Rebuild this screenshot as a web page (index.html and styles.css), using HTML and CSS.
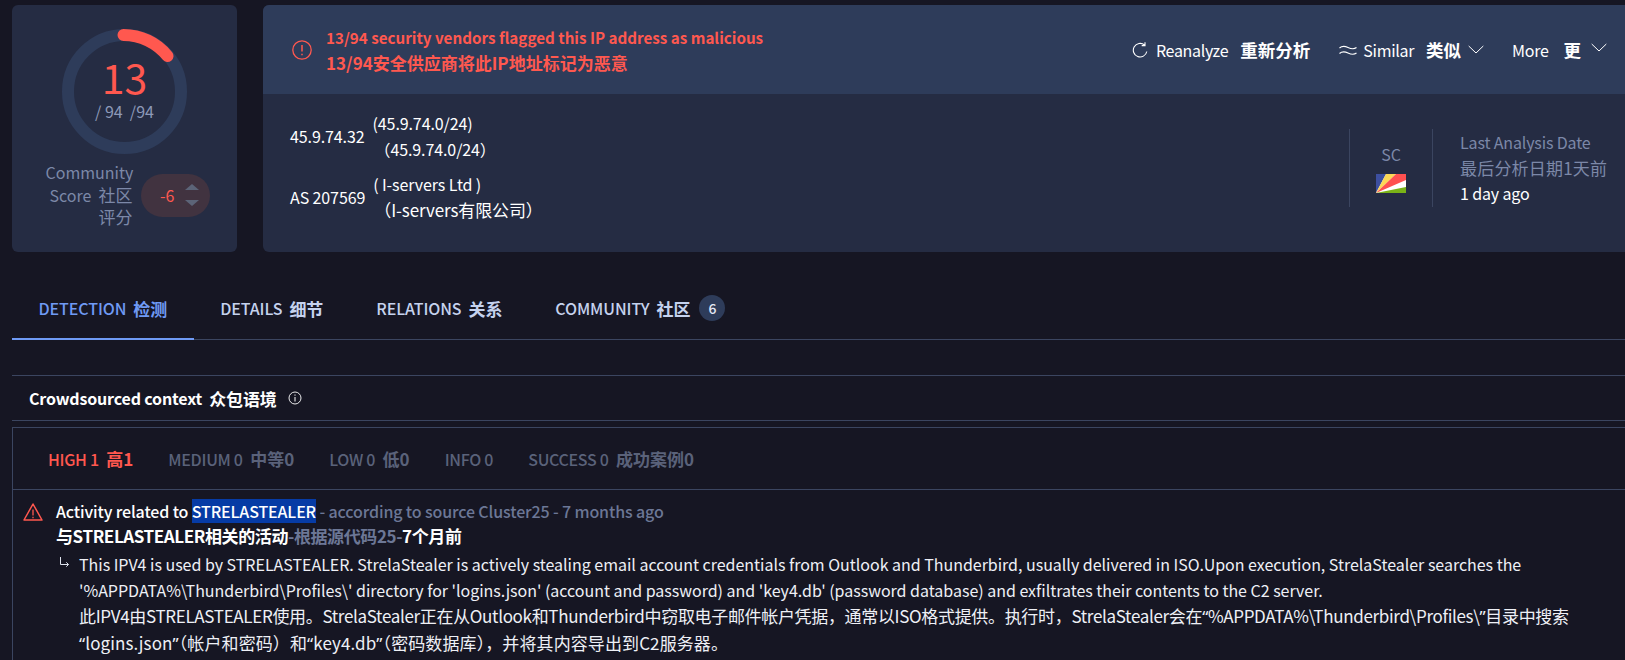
FILE: index.html
```html
<!DOCTYPE html>
<html lang="en">
<head>
    <meta charset="UTF-8">
    <meta name="viewport" content="width=device-width, initial-scale=1.0">
    <title>45.9.74.32</title>
    <link rel="stylesheet" href="styles.css">
</head>
<body>

<div class="summary">
    <div class="score-card">
        <div class="gauge">
            <svg width="125" height="125" viewBox="0 0 125 125">
                <circle cx="62.500" cy="62.500" r="56.500" fill="none" stroke="#2e3c5a" stroke-width="12"/>
                <path d="M61.500 6 A56.500 56.500 0 0 1 105.500 27" fill="none" stroke="#ff584f" stroke-width="12" stroke-linecap="round"/>
            </svg>
            <div class="gauge-text">
                <div class="gauge-num">13</div>
                <div class="gauge-total">/ 94 &nbsp;/94</div>
            </div>
        </div>
        <div class="community">
            <div class="community-label">Community<br>Score&nbsp; <span class="label-zh">社区</span><br><span class="label-zh">评分</span></div>
            <div class="vote">
                <span class="vote-num">-6</span>
                <span class="vote-arrows"><i class="arrow-up"></i><i class="arrow-down"></i></span>
            </div>
        </div>
    </div>

    <div class="info-card">
        <div class="alert-bar">
            <svg class="alert-icon" width="20" height="20" viewBox="0 0 20 20">
                <circle cx="10" cy="10" r="9.200" fill="none" stroke="#ff584f" stroke-width="1.300"/>
                <path d="M10 5v6.500M10 13.700v1.500" stroke="#ff584f" stroke-width="1.500" fill="none"/>
            </svg>
            <div class="alert-text">
                <div>13/94 security vendors flagged this IP address as malicious</div>
                <div class="alert-zh">13/94安全供应商将此IP地址标记为恶意</div>
            </div>
            <div class="actions">
                <span class="action action-first">
                    <svg class="action-icon" width="16" height="16" viewBox="0 0 16 16"><path d="M14.800 9.500A6.800 6.800 0 1 1 12.500 3M13 .3v3.300H9.700" fill="none" stroke="#fff" stroke-width="1.100"/></svg>
                    <span class="en">Reanalyze</span><b class="zh">重新分析</b>
                </span>
                <span class="action action-similar">
                    <svg class="action-icon" width="18" height="10" viewBox="0 0 18 10"><path d="M.5 3C3 .8 5.500 .8 9 2.500S15 4.500 17.500 2.500M.5 8.500C3 6.300 5.500 6.300 9 8S15 10 17.500 8" fill="none" stroke="#fff" stroke-width="1.100"/></svg>
                    <span class="en">Similar</span><b class="zh">类似</b>
                    <svg class="chev" width="16" height="9" viewBox="0 0 16 9"><path d="M.7 1l7.300 7 7.300-7" fill="none" stroke="#fff" stroke-width="1"/></svg>
                </span>
                <span class="action action-more">
                    <span class="en">More</span><b class="zh">更</b>
                    <svg class="chev chev-more" width="16" height="9" viewBox="0 0 16 9"><path d="M.7 1l7.300 7 7.300-7" fill="none" stroke="#fff" stroke-width="1"/></svg>
                </span>
            </div>
        </div>
        <div class="info-body">
            <div class="ip-info">
                <div class="ip-row">
                    <span>45.9.74.32</span>
                    <span class="ip-note">(45.9.74.0/24)<br><span class="ip-cidr-zh">（45.9.74.0/24）</span></span>
                </div>
                <div class="ip-row">
                    <span>AS 207569</span>
                    <span class="ip-note">( I-servers Ltd )<br><span class="ip-name-zh">（I-servers有限公司）</span></span>
                </div>
            </div>
            <div class="country">
                <span>SC</span>
                <svg width="30" height="19" viewBox="0 0 30 19">
                    <rect width="30" height="19" fill="#fff"/>
                    <path d="M0 19V0H10Z" fill="#3d4f9f"/>
                    <path d="M0 19L10 0H20Z" fill="#fcd856"/>
                    <path d="M0 19L20 0H30V6Z" fill="#ff5050"/>
                    <path d="M0 19L30 13V19Z" fill="#7ab317"/>
                </svg>
            </div>
            <div class="analysis">
                <div class="analysis-label">Last Analysis Date</div>
                <div class="analysis-label analysis-zh">最后分析日期1天前</div>
                <div class="analysis-value">1 day ago</div>
            </div>
        </div>
    </div>
</div>

<div class="tabs">
    <div class="tab active"><span>DETECTION</span><span class="zh">检测</span></div>
    <div class="tab"><span>DETAILS</span><span class="zh">细节</span></div>
    <div class="tab"><span>RELATIONS</span><span class="zh">关系</span></div>
    <div class="tab"><span>COMMUNITY</span><span class="zh">社区</span><span class="tab-badge">6</span></div>
</div>

<div class="section-head">
    <span>Crowdsourced context</span><span class="zh">众包语境</span>
    <svg width="14" height="14" viewBox="0 0 14 14">
        <circle cx="7" cy="7" r="6" fill="none" stroke="#fff" stroke-width=".9"/>
        <path d="M7 6v4.500M7 3.500v1.200" stroke="#fff" stroke-width="1" fill="none"/>
    </svg>
</div>

<div class="context-box">
    <div class="filters">
        <span class="filter high"><span>HIGH 1</span><span class="zh">高1</span></span>
        <span class="filter"><span>MEDIUM 0</span><span class="zh">中等0</span></span>
        <span class="filter"><span>LOW 0</span><span class="zh">低0</span></span>
        <span class="filter"><span>INFO 0</span></span>
        <span class="filter"><span>SUCCESS 0</span><span class="zh">成功案例0</span></span>
    </div>
    <div class="entry">
        <svg class="warn" width="20" height="18" viewBox="0 0 20 18">
            <path d="M10 1L19 17H1Z" fill="none" stroke="#ff584f" stroke-width="1.500" stroke-linejoin="round"/>
            <path d="M10 6.500v6M10 13.800v1.500" stroke="#ff584f" stroke-width="1.300" fill="none"/>
        </svg>
        <div class="entry-main">
            <div class="entry-title">Activity related to <span class="selected">STRELASTEALER</span> <span class="muted">- according to source Cluster25 - 7 months ago</span></div>
            <div class="entry-title entry-title-zh">与STRELASTEALER相关的活动<span class="muted">-根据源代码25-</span>7个月前</div>
            <div class="entry-desc">
                <svg class="reply" width="11" height="11" viewBox="0 0 11 11"><path d="M1.500 0v7.500H9.500M7.300 5.300L9.500 7.500 7.300 9.700" fill="none" stroke="#dfe3ee" stroke-width="1"/></svg>
                <div>
                    <p>This IPV4 is used by STRELASTEALER. StrelaStealer is actively stealing email account credentials from Outlook and Thunderbird, usually delivered in ISO.Upon execution, StrelaStealer searches the<br>'%APPDATA%\Thunderbird\Profiles\' directory for 'logins.json' (account and password) and 'key4.db' (password database) and exfiltrates their contents to the C2 server.</p>
                    <p class="desc-zh">此IPV4由STRELASTEALER使用。StrelaStealer正在从Outlook和Thunderbird中窃取电子邮件帐户凭据，通常以ISO格式提供。执行时，StrelaStealer会在<span class="q">“</span>%APPDATA%\Thunderbird\Profiles\<span class="q">”</span>目录中搜索<br><span class="desc-zh-end"><span class="q">“</span>logins.json<span class="q">”</span>（帐户和密码）和<span class="q">“</span>key4.db<span class="q">”</span>（密码数据库），并将其内容导出到C2服务器。</span></p>
                </div>
            </div>
        </div>
    </div>
</div>

</body>
</html>
```

FILE: styles.css
```css
html, body {
    height: 660px;
    overflow: hidden;
}

body {
    font-family: "Noto Sans CJK SC", "Noto Sans", sans-serif;
    font-size: 16px;
    background-color: #161623;
    color: #fff;
    margin: 0;
    padding: 5px 0 0 12px;
    box-sizing: border-box;
}

.zh {
    font-size: 17px;
    margin-left: 7px;
}

.summary {
    display: flex;
    gap: 26px;
    height: 247px;
}

/* score card */
.score-card {
    width: 225px;
    flex: none;
    background-color: #252c43;
    border-radius: 6px;
    display: flex;
    flex-direction: column;
    align-items: center;
    padding-top: 24px;
    box-sizing: border-box;
}

.gauge {
    position: relative;
    width: 125px;
    height: 125px;
}

.gauge-text {
    position: absolute;
    inset: 0;
    text-align: center;
}

.gauge-num {
    font-size: 41px;
    color: #ff584f;
    line-height: 44px;
    margin-top: 25px;
}

.gauge-total {
    font-size: 16px;
    color: #8d99b8;
    line-height: 20px;
    margin-top: 3px;
}

.community {
    display: flex;
    align-items: center;
    gap: 8px;
    margin-top: 8px;
    margin-left: 6px;
}

.community-label {
    width: 87px;
    text-align: right;
    color: #7c88a8;
    line-height: 21.500px;
    white-space: nowrap;
}

.label-zh {
    font-size: 17px;
}

.vote {
    width: 69px;
    height: 43px;
    border-radius: 22px;
    background-color: #413340;
    display: flex;
    align-items: center;
    justify-content: flex-end;
    gap: 10px;
    padding-right: 11px;
    box-sizing: border-box;
}

.vote-num {
    color: #ff584f;
}

.vote-arrows {
    display: flex;
    flex-direction: column;
    gap: 10px;
}

.arrow-up, .arrow-down {
    display: block;
    width: 0;
    height: 0;
    border-left: 7px solid transparent;
    border-right: 7px solid transparent;
}

.arrow-up {
    border-bottom: 6px solid #5c6478;
}

.arrow-down {
    border-top: 6px solid #5c6478;
}

/* info card */
.info-card {
    flex: 1;
    background-color: #252c43;
    border-radius: 6px 0 0 6px;
    overflow: hidden;
    display: flex;
    flex-direction: column;
}

.alert-bar {
    height: 89px;
    background-color: #2e3c5a;
    display: flex;
    align-items: center;
    padding-left: 29px;
    flex: none;
}

.alert-text {
    margin-left: 14px;
    color: #ff584f;
    font-weight: 700;
    font-size: 15.200px;
    line-height: 25px;
    white-space: nowrap;
}

.alert-zh {
    font-size: 17px;
}

.actions {
    margin-left: auto;
    display: flex;
    align-items: center;
}

.action {
    display: flex;
    align-items: center;
}

.action .en {
    letter-spacing: -0.3px;
}

.action .zh {
    font-size: 17.500px;
    margin-left: 12px;
}

.action-more .zh {
    margin-left: 15px;
}

.action-icon {
    margin-right: 8px;
}

.action-similar .action-icon {
    margin-right: 6px;
}

.chev {
    margin-left: 7px;
}

.chev-more {
    margin-left: 10px;
    margin-top: -4px;
}

.action-first {
    margin-right: 29px;
}

.action-similar {
    margin-right: 28px;
}

.action-more {
    margin-right: 18px;
}

.info-body {
    flex: 1;
    display: flex;
    align-items: center;
    padding: 0 18px 10px 27px;
}

.ip-info {
    display: flex;
    flex-direction: column;
    gap: 9px;
    margin-right: auto;
    margin-bottom: 4px;
    letter-spacing: -0.1px;
}

.ip-row {
    display: flex;
    align-items: center;
    gap: 8px;
}

.ip-note {
    line-height: 26px;
}

.ip-cidr-zh {
    margin-left: 2px;
}

.ip-name-zh {
    font-size: 17px;
    margin-left: 1px;
}

.country {
    width: 84px;
    height: 78px;
    border-left: 1px solid #3b4560;
    border-right: 1px solid #3b4560;
    display: flex;
    flex-direction: column;
    align-items: center;
    justify-content: center;
    gap: 8px;
    padding-bottom: 2px;
    color: #7c88a8;
    box-sizing: border-box;
}

.analysis {
    margin-left: 27px;
    width: 147px;
    line-height: 25.500px;
    white-space: nowrap;
    letter-spacing: -0.15px;
}

.analysis-label {
    color: #7c88a8;
}

.analysis-zh {
    font-size: 17px;
    letter-spacing: 0.2px;
}

/* tabs */
.tabs {
    display: flex;
    margin-top: 28px;
    height: 59px;
    border-bottom: 1px solid #3b4560;
    font-weight: 500;
    color: #c5d2ee;
    letter-spacing: -0.1px;
}

.tabs .zh {
    font-weight: 700;
}

.tab {
    display: flex;
    align-items: center;
    padding: 0 26.500px 2px;
    margin-bottom: -1px;
    border-bottom: 2px solid transparent;
}

.tab.active {
    color: #6f9af5;
    border-bottom-color: #6f9af5;
}

.tab-badge {
    width: 26px;
    height: 26px;
    border-radius: 50%;
    background-color: #2e3c5a;
    font-size: 14px;
    display: flex;
    align-items: center;
    justify-content: center;
    margin-left: 9px;
    color: #e4e9f5;
}

.section-head {
    margin-top: 35px;
    height: 44px;
    border-top: 1px solid #3b4560;
    border-bottom: 1px solid #3b4560;
    display: flex;
    align-items: center;
    padding-left: 17px;
    font-weight: 700;
    letter-spacing: -0.15px;
}

.section-head svg {
    margin-left: 11px;
}

/* context box */
.context-box {
    margin-top: 6px;
    border: 1px solid #3b4560;
    border-right: none;
    border-bottom: none;
    height: 233px;
    box-sizing: border-box;
    overflow: hidden;
}

.filters {
    height: 61px;
    border-bottom: 1px solid #3b4560;
    display: flex;
    align-items: center;
    gap: 35px;
    padding-left: 35px;
    font-weight: 500;
    color: #5a627a;
    letter-spacing: -0.3px;
}

.filters .zh {
    font-weight: 700;
    letter-spacing: 0;
    margin-left: 7.500px;
}

.filter {
    display: flex;
    align-items: center;
}

.filter.high {
    color: #ff584f;
}

.entry {
    display: flex;
    padding: 8px 0 0 10px;
    gap: 13px;
}

.warn {
    margin-top: 5px;
    flex: none;
}

.entry-main {
    flex: 1;
    min-width: 0;
}

.entry-title {
    font-weight: 500;
    line-height: 26px;
    letter-spacing: -0.13px;
    white-space: nowrap;
}

.entry-title-zh {
    font-size: 17px;
    font-weight: 700;
    letter-spacing: -0.4px;
    margin-top: -1px;
}

.muted {
    color: #6c7796;
}

.selected {
    background-color: #063ba5;
}

.entry-desc {
    display: flex;
    gap: 9px;
    margin-top: 2px;
}

.reply {
    margin-top: 6px;
    margin-left: 3px;
    flex: none;
}

.entry-desc p {
    margin: 0;
    line-height: 26px;
    color: #eef0f6;
    white-space: nowrap;
    letter-spacing: -0.02px;
}

.entry-desc .desc-zh {
    font-size: 17px;
    letter-spacing: -0.33px;
}

.desc-zh-end {
    letter-spacing: 0.1px;
}

.q {
    font-family: "Noto Sans", sans-serif;
}
```
